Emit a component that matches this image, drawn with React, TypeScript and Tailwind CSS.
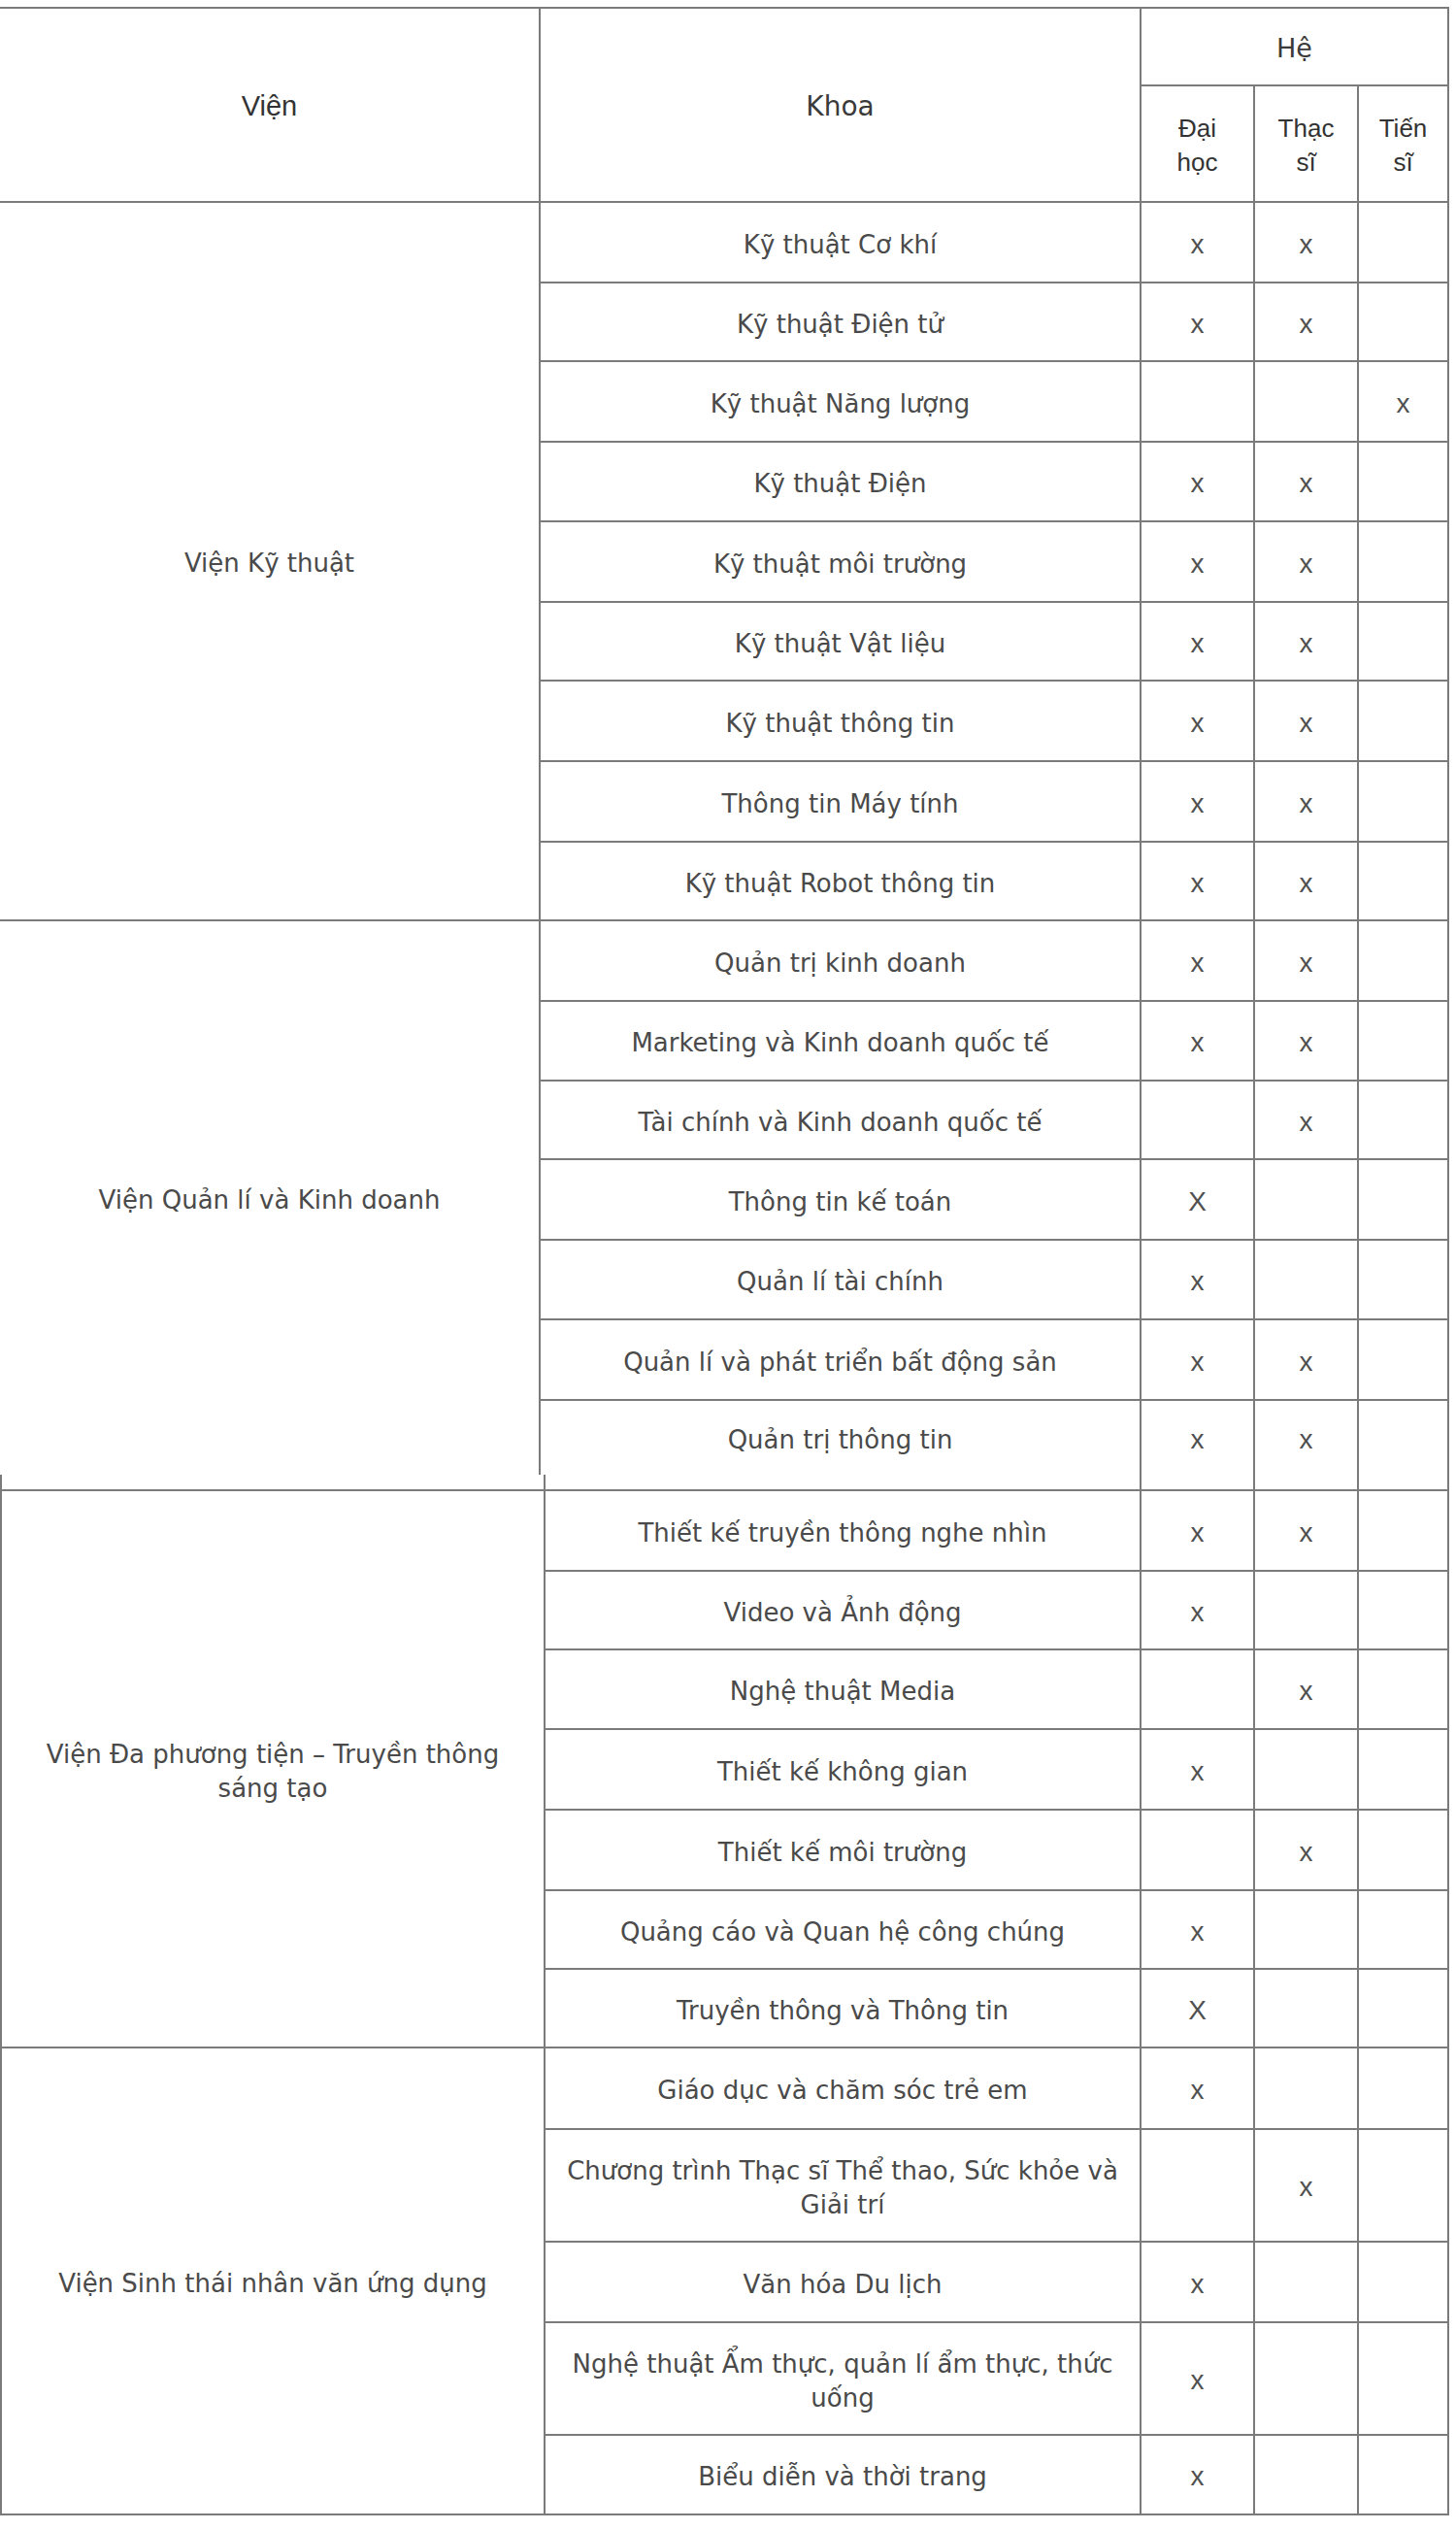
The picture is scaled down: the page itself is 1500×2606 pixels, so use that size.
type Mark = '' | 'x' | 'X';

interface Khoa {
  name: string[];
  h: string;
  marks: [Mark, Mark, Mark];
}

interface Vien {
  name: string[];
  rows: Khoa[];
  open?: boolean;
}

const line = 'border-[#7b7b7b]';

const upper: Vien[] = [
  {
    name: ['Viện Kỹ thuật'],
    rows: [
      { name: ['Kỹ thuật Cơ khí'], h: 'h-[83px]', marks: ['x', 'x', ''] },
      { name: ['Kỹ thuật Điện tử'], h: 'h-[81px]', marks: ['x', 'x', ''] },
      { name: ['Kỹ thuật Năng lượng'], h: 'h-[83px]', marks: ['', '', 'x'] },
      { name: ['Kỹ thuật Điện'], h: 'h-[82px]', marks: ['x', 'x', ''] },
      { name: ['Kỹ thuật môi trường'], h: 'h-[83px]', marks: ['x', 'x', ''] },
      { name: ['Kỹ thuật Vật liệu'], h: 'h-[81px]', marks: ['x', 'x', ''] },
      { name: ['Kỹ thuật thông tin'], h: 'h-[83px]', marks: ['x', 'x', ''] },
      { name: ['Thông tin Máy tính'], h: 'h-[83px]', marks: ['x', 'x', ''] },
      { name: ['Kỹ thuật Robot thông tin'], h: 'h-[81px]', marks: ['x', 'x', ''] },
    ],
  },
  {
    name: ['Viện Quản lí và Kinh doanh'],
    open: true,
    rows: [
      { name: ['Quản trị kinh doanh'], h: 'h-[83px]', marks: ['x', 'x', ''] },
      { name: ['Marketing và Kinh doanh quốc tế'], h: 'h-[82px]', marks: ['x', 'x', ''] },
      { name: ['Tài chính và Kinh doanh quốc tế'], h: 'h-[81px]', marks: ['', 'x', ''] },
      { name: ['Thông tin kế toán'], h: 'h-[83px]', marks: ['X', '', ''] },
      { name: ['Quản lí tài chính'], h: 'h-[82px]', marks: ['x', '', ''] },
      { name: ['Quản lí và phát triển bất động sản'], h: 'h-[83px]', marks: ['x', 'x', ''] },
      { name: ['Quản trị thông tin'], h: 'h-[76px]', marks: ['x', 'x', ''] },
    ],
  },
];

const lower: Vien[] = [
  {
    name: ['Viện Đa phương tiện – Truyền thông', 'sáng tạo'],
    rows: [
      { name: ['Thiết kế truyền thông nghe nhìn'], h: 'h-[83px]', marks: ['x', 'x', ''] },
      { name: ['Video và Ảnh động'], h: 'h-[81px]', marks: ['x', '', ''] },
      { name: ['Nghệ thuật Media'], h: 'h-[82px]', marks: ['', 'x', ''] },
      { name: ['Thiết kế không gian'], h: 'h-[83px]', marks: ['x', '', ''] },
      { name: ['Thiết kế môi trường'], h: 'h-[83px]', marks: ['', 'x', ''] },
      { name: ['Quảng cáo và Quan hệ công chúng'], h: 'h-[81px]', marks: ['x', '', ''] },
      { name: ['Truyền thông và Thông tin'], h: 'h-[81px]', marks: ['X', '', ''] },
    ],
  },
  {
    name: ['Viện Sinh thái nhân văn ứng dụng'],
    rows: [
      { name: ['Giáo dục và chăm sóc trẻ em'], h: 'h-[84px]', marks: ['x', '', ''] },
      { name: ['Chương trình Thạc sĩ Thể thao, Sức khỏe và', 'Giải trí'], h: 'h-[116px]', marks: ['', 'x', ''] },
      { name: ['Văn hóa Du lịch'], h: 'h-[83px]', marks: ['x', '', ''] },
      { name: ['Nghệ thuật Ẩm thực, quản lí ẩm thực, thức', 'uống'], h: 'h-[116px]', marks: ['x', '', ''] },
      { name: ['Biểu diễn và thời trang'], h: 'h-[82px]', marks: ['x', '', ''] },
    ],
  },
];

const markCols = ['w-[117px] border-r-2', 'w-[107px] border-r-2', 'w-[91px]'];

function MarkText({ v }: { v: Mark }) {
  if (!v) return null;
  return (
    <span className="pt-[4px] font-['Liberation_Sans',Arial,sans-serif] text-[28px] leading-none text-[#505050]">
      {v}
    </span>
  );
}

function Lines({ text }: { text: string[] }) {
  return (
    <div className="pt-[5px] text-center text-[26px] leading-[35px]">
      {text.map((t, i) => (
        <div key={i}>{t}</div>
      ))}
    </div>
  );
}

function Section({
  vien,
  vienW,
  khoaW,
}: {
  vien: Vien;
  vienW: string;
  khoaW: string;
}) {
  return (
    <div className="flex">
      <div
        className={`${vienW} shrink-0 flex items-center justify-center border-r-2 ${
          vien.open ? '' : 'border-b-2'
        } ${line}`}
      >
        <Lines text={vien.name} />
      </div>
      <div className="flex flex-col">
        {vien.rows.map((r, i) => {
          const last = vien.open && i === vien.rows.length - 1;
          return (
            <div
              key={i}
              className={`flex ${r.h} ${last ? '' : 'border-b-2'} ${line}`}
            >
              <div
                className={`${khoaW} shrink-0 flex items-center justify-center border-r-2 ${line}`}
              >
                <Lines text={r.name} />
              </div>
              {r.marks.map((m, j) => (
                <div
                  key={j}
                  className={`${markCols[j]} shrink-0 flex items-center justify-center ${line}`}
                >
                  <MarkText v={m} />
                </div>
              ))}
            </div>
          );
        })}
      </div>
    </div>
  );
}

function Header() {
  return (
    <div className="flex h-[200px]">
      <div
        className={`w-[557px] shrink-0 flex items-center justify-center border-r-2 border-b-2 ${line}`}
      >
        <span className="pt-[3px] font-['Liberation_Sans',Arial,sans-serif] text-[29px] text-[#333]">
          Viện
        </span>
      </div>
      <div
        className={`w-[619px] shrink-0 flex items-center justify-center border-r-2 border-b-2 ${line}`}
      >
        <span className="pt-[3px] text-[28px] text-[#3a3a3a]">Khoa</span>
      </div>
      <div className="w-[315px] flex flex-col">
        <div className={`h-[80px] flex items-center justify-center border-b-2 ${line}`}>
          <span className="pt-[5px] text-[27px] text-[#3a3a3a]">Hệ</span>
        </div>
        <div className={`h-[120px] flex border-b-2 ${line}`}>
          {[
            ['Đại', 'học'],
            ['Thạc', 'sĩ'],
            ['Tiến', 'sĩ'],
          ].map((t, i) => (
            <div
              key={i}
              className={`${markCols[i]} shrink-0 flex items-center justify-center ${line}`}
            >
              <div className="pt-[3px] text-center font-['Liberation_Sans',Arial,sans-serif] text-[26px] leading-[35px] text-[#333]">
                <div>{t[0]}</div>
                <div>{t[1]}</div>
              </div>
            </div>
          ))}
        </div>
      </div>
    </div>
  );
}

export default function App() {
  return (
    <div className="w-[1500px] h-[2606px] bg-white pt-[7px] font-['DejaVu_Sans',sans-serif] text-[#4a4a4a]">
      <div className={`w-[1493px] border-t-2 border-r-2 ${line}`}>
        <Header />
        {upper.map((v, i) => (
          <Section key={i} vien={v} vienW="w-[557px]" khoaW="w-[619px]" />
        ))}
      </div>
      <div className={`w-[1493px] border-l-2 border-r-2 ${line}`}>
        {/* cut-off row left over above the second part */}
        <div className={`flex h-[17px] border-b-2 ${line}`}>
          <div className={`w-[560px] border-r-2 ${line}`} />
          <div className={`w-[614px] border-r-2 ${line}`} />
          <div className={`w-[117px] border-r-2 ${line}`} />
          <div className={`w-[107px] border-r-2 ${line}`} />
          <div className="w-[91px]" />
        </div>
        {lower.map((v, i) => (
          <Section key={i} vien={v} vienW="w-[560px]" khoaW="w-[614px]" />
        ))}
      </div>
    </div>
  );
}
